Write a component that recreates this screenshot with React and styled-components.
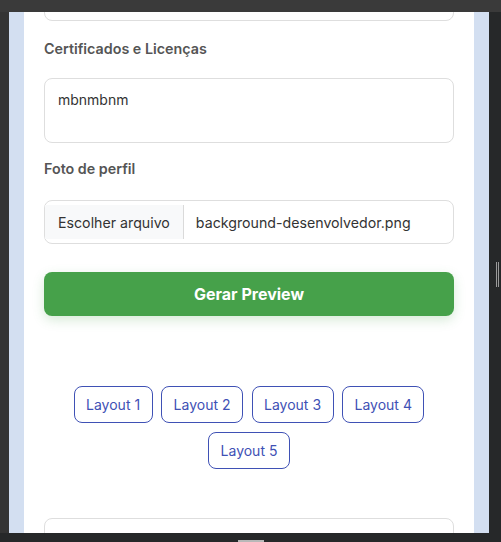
import React from "react";
import styled, { createGlobalStyle } from "styled-components";

const Global = createGlobalStyle`
  html, body { margin: 0; padding: 0; background: #262829; }
  body { font-family: Inter, "Noto Sans", sans-serif; }
  * { box-sizing: border-box; }
`;

const Screen = styled.div`
  width: 501px;
  height: 542px;
  display: flex;
  flex-direction: column;
  overflow: hidden;
  background: #262829;
`;

const TopBar = styled.div`
  height: 12px;
  flex: none;
  background: #3a3a3a;
`;

const Middle = styled.div`
  flex: 1;
  display: flex;
  min-height: 0;
`;

const LeftStrip = styled.div`
  width: 9px;
  background: #343434;
`;

const Frame = styled.div`
  width: 480px;
  background: #d3dff1;
  padding: 0 15px;
  display: flex;
`;

const Card = styled.div`
  flex: 1;
  background: #ffffff;
  padding: 0 20px;
  overflow: hidden;
  display: flex;
  flex-direction: column;
`;

const RightStrip = styled.div`
  flex: 1;
  background: #262829;
  display: flex;
  align-items: flex-start;
  padding: 250px 0 0 7px;
`;

const Handle = styled.div`
  width: 3px;
  height: 25px;
  border-left: 1px solid #9a9a9a;
  border-right: 1px solid #9a9a9a;
`;

const BottomBar = styled.div`
  height: 9px;
  flex: none;
  background: #262829;
  display: flex;
  justify-content: center;
  align-items: flex-end;
`;

const BottomNub = styled.div`
  width: 26px;
  height: 2px;
  background: #b8b8b8;
`;

const ClippedInput = styled.div`
  height: 44px;
  flex: none;
  margin-top: -35px;
  border: 1px solid #dedede;
  border-radius: 8px;
`;

const Label = styled.div`
  font-size: 14.3px;
  font-weight: 600;
  color: #555;
  line-height: 17px;
  margin: ${(p) => p.$mt}px 0 ${(p) => p.$mb}px;
`;

const TextArea = styled.div`
  height: 65px;
  flex: none;
  border: 1px solid #dedede;
  border-radius: 8px;
  padding: 11px 13px;
  font-size: 14px;
  line-height: 20px;
  color: #333;
`;

const FileBox = styled.div`
  height: 44px;
  flex: none;
  border: 1px solid #dedede;
  border-radius: 8px;
  padding: 4px 0;
  display: flex;
  align-items: stretch;
  font-size: 14.2px;
  color: #333;
`;

const FileButton = styled.div`
  background: #f8f9fa;
  border-right: 1px solid #dadada;
  padding: 0 13px;
  display: flex;
  align-items: center;
`;

const FileName = styled.div`
  padding-left: 12px;
  display: flex;
  align-items: center;
`;

const PrimaryButton = styled.div`
  margin-top: 28px;
  height: 44px;
  flex: none;
  border-radius: 8px;
  background: #46a14a;
  color: #fff;
  font-weight: 700;
  font-size: 16px;
  display: flex;
  align-items: center;
  justify-content: center;
  box-shadow: 0 4px 12px rgba(70, 161, 74, 0.22);
`;

const LayoutGroup = styled.div`
  margin-top: 70px;
  display: flex;
  flex-wrap: wrap;
  justify-content: center;
  gap: 9px 8.5px;
  padding: 0 20px;
`;

const LayoutButton = styled.div`
  height: 37px;
  padding: 0 11.5px;
  border: 1px solid #3f51b5;
  border-radius: 8px;
  color: #3f51b5;
  font-size: 14px;
  display: flex;
  align-items: center;
`;

const BottomBox = styled.div`
  margin-top: 49px;
  height: 60px;
  flex: none;
  border: 1px solid #dedede;
  border-radius: 8px;
`;

export default function App() {
  return (
    <Screen>
      <Global />
      <TopBar />
      <Middle>
        <LeftStrip />
        <Frame>
          <Card>
            <ClippedInput />
            <Label $mt={19} $mb={21}>Certificados e Licenças</Label>
            <TextArea>mbnmbnm</TextArea>
            <Label $mt={17} $mb={23}>Foto de perfil</Label>
            <FileBox>
              <FileButton>Escolher arquivo</FileButton>
              <FileName>background-desenvolvedor.png</FileName>
            </FileBox>
            <PrimaryButton>Gerar Preview</PrimaryButton>
            <LayoutGroup>
              {[1, 2, 3, 4, 5].map((n) => (
                <LayoutButton key={n}>Layout {n}</LayoutButton>
              ))}
            </LayoutGroup>
            <BottomBox />
          </Card>
        </Frame>
        <RightStrip>
          <Handle />
        </RightStrip>
      </Middle>
      <BottomBar>
        <BottomNub />
      </BottomBar>
    </Screen>
  );
}
